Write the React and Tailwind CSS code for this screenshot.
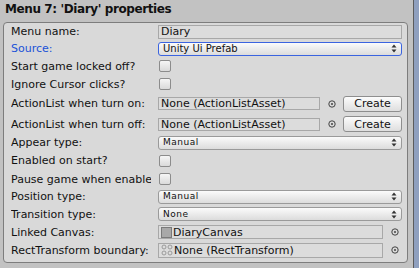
import React from "react";

const F = { fontFamily: '"DejaVu Sans", Verdana, sans-serif' };

function Picker() {
  return (
    <svg width="8" height="8" viewBox="0 0 8 8" className="shrink-0">
      <circle cx="4" cy="4" r="3.2" fill="none" stroke="#444" strokeWidth="1" />
      <circle cx="4" cy="4" r="1" fill="#444" />
    </svg>
  );
}

function Arrows() {
  return (
    <svg width="6" height="9" viewBox="0 0 6 9" className="shrink-0">
      <path d="M3 0.5 L5.5 3.5 H0.5 Z" fill="#333" />
      <path d="M3 8.5 L5.5 5.5 H0.5 Z" fill="#333" />
    </svg>
  );
}

function Label({ children, blue, clip }) {
  return (
    <div className="w-[147px] shrink-0 flex">
      <div
        className={`${clip ? "w-[140px]" : "w-[147px]"} whitespace-nowrap overflow-hidden text-[11px] leading-[13px] ${
          blue ? "text-[#2052d8]" : "text-[#111]"
        }`}
      >
        {children}
      </div>
    </div>
  );
}

function Popup({ text, focused, small }) {
  return (
    <div
      className={`w-[244px] h-[14px] rounded-[3px] flex items-center justify-between pl-[4px] pr-[4px] bg-gradient-to-b from-[#fbfbfb] to-[#dcdcdc] ${
        focused ? "border border-[#3b64e0]" : "border border-[#9a9a9a]"
      }`}
    >
      <span className={`${small ? "text-[9px] tracking-[0.5px]" : "text-[10px]"} leading-none text-[#111]`}>{text}</span>
      <Arrows />
    </div>
  );
}

function Check() {
  return <div className="w-[12px] h-[12px] ml-[1px] rounded-[2px] border border-[#8c8c8c] bg-gradient-to-b from-[#f6f6f6] to-[#dadada]" />;
}

function Field({ w, children, h = "h-[13px]" }) {
  return (
    <div className={`${w} ${h} border border-[#a8a8a8] bg-[#dcdcdc] flex items-center pl-[2px] text-[11px] leading-none text-[#111] whitespace-nowrap overflow-hidden`}>
      {children}
    </div>
  );
}

function Button({ children }) {
  return (
    <div className="w-[59px] h-[16px] rounded-[3px] border border-[#8e8e8e] bg-gradient-to-b from-[#fcfcfc] to-[#dedede] flex items-center justify-center text-[11px] leading-none text-[#111]">
      {children}
    </div>
  );
}

function Row({ h, children }) {
  return <div className={`${h} flex items-center`}>{children}</div>;
}

function RectIcon() {
  return (
    <svg width="12" height="12" viewBox="0 0 12 12" className="shrink-0 mr-[1px]">
      <circle cx="3" cy="3" r="2" fill="none" stroke="#9a9a9a" strokeWidth="1" />
      <circle cx="9" cy="3" r="2" fill="none" stroke="#9a9a9a" strokeWidth="1" />
      <circle cx="3" cy="9" r="2" fill="none" stroke="#9a9a9a" strokeWidth="1" />
      <circle cx="9" cy="9" r="2" fill="none" stroke="#9a9a9a" strokeWidth="1" />
    </svg>
  );
}

export default function App() {
  return (
    <div className="w-[419px] h-[268px] bg-[#c2c2c2] flex overflow-hidden" style={F}>
      <div className="w-[413px] flex flex-col">
        <div className="h-[22px] pl-[5px] pt-[2px] text-[12px] font-bold leading-[15px] tracking-[-0.4px] text-[#111] whitespace-nowrap">
          Menu 7: 'Diary' properties
        </div>
        <div className="ml-[3px] w-[405px] h-[241px] rounded-[4px] border border-[#7d7d7d] bg-[#d9d9d9] pl-[7px] flex flex-col">
          <Row h="h-[17px]">
            <Label>Menu name:</Label>
            <Field w="w-[244px]" h="h-[14px]">Diary</Field>
          </Row>
          <Row h="h-[17px]">
            <Label blue>Source:</Label>
            <Popup text="Unity Ui Prefab" focused />
          </Row>
          <Row h="h-[18px]">
            <Label>Start game locked off?</Label>
            <Check />
          </Row>
          <Row h="h-[18px]">
            <Label>Ignore Cursor clicks?</Label>
            <Check />
          </Row>
          <Row h="h-[21px]">
            <Label>ActionList when turn on:</Label>
            <Field w="w-[162px]">None (ActionListAsset)</Field>
            <div className="w-[23px] flex justify-center"><Picker /></div>
            <Button>Create</Button>
          </Row>
          <Row h="h-[20px]">
            <Label>ActionList when turn off:</Label>
            <Field w="w-[162px]">None (ActionListAsset)</Field>
            <div className="w-[23px] flex justify-center"><Picker /></div>
            <Button>Create</Button>
          </Row>
          <Row h="h-[17px]">
            <Label>Appear type:</Label>
            <Popup text="Manual" small />
          </Row>
          <Row h="h-[19px]">
            <Label>Enabled on start?</Label>
            <Check />
          </Row>
          <Row h="h-[18px]">
            <Label clip>Pause game when enabled?</Label>
            <Check />
          </Row>
          <Row h="h-[17px]">
            <Label>Position type:</Label>
            <Popup text="Manual" small />
          </Row>
          <Row h="h-[18px]">
            <Label>Transition type:</Label>
            <Popup text="None" small />
          </Row>
          <Row h="h-[18px]">
            <Label>Linked Canvas:</Label>
            <Field w="w-[225px]" h="h-[14px]">
              <div className="w-[11px] h-[11px] mr-[1px] border border-[#7a7a7a] bg-[#a8a8a8] shrink-0" />
              DiaryCanvas
            </Field>
            <div className="w-[24px] flex justify-center"><Picker /></div>
          </Row>
          <Row h="h-[18px]">
            <Label>RectTransform boundary:</Label>
            <Field w="w-[225px]" h="h-[15px]">
              <RectIcon />
              None (RectTransform)
            </Field>
            <div className="w-[24px] flex justify-center"><Picker /></div>
          </Row>
        </div>
      </div>
      <div className="w-[1px] bg-[#5c5c5c]" />
      <div className="flex-1 bg-[#8fa0bf]" />
    </div>
  );
}
